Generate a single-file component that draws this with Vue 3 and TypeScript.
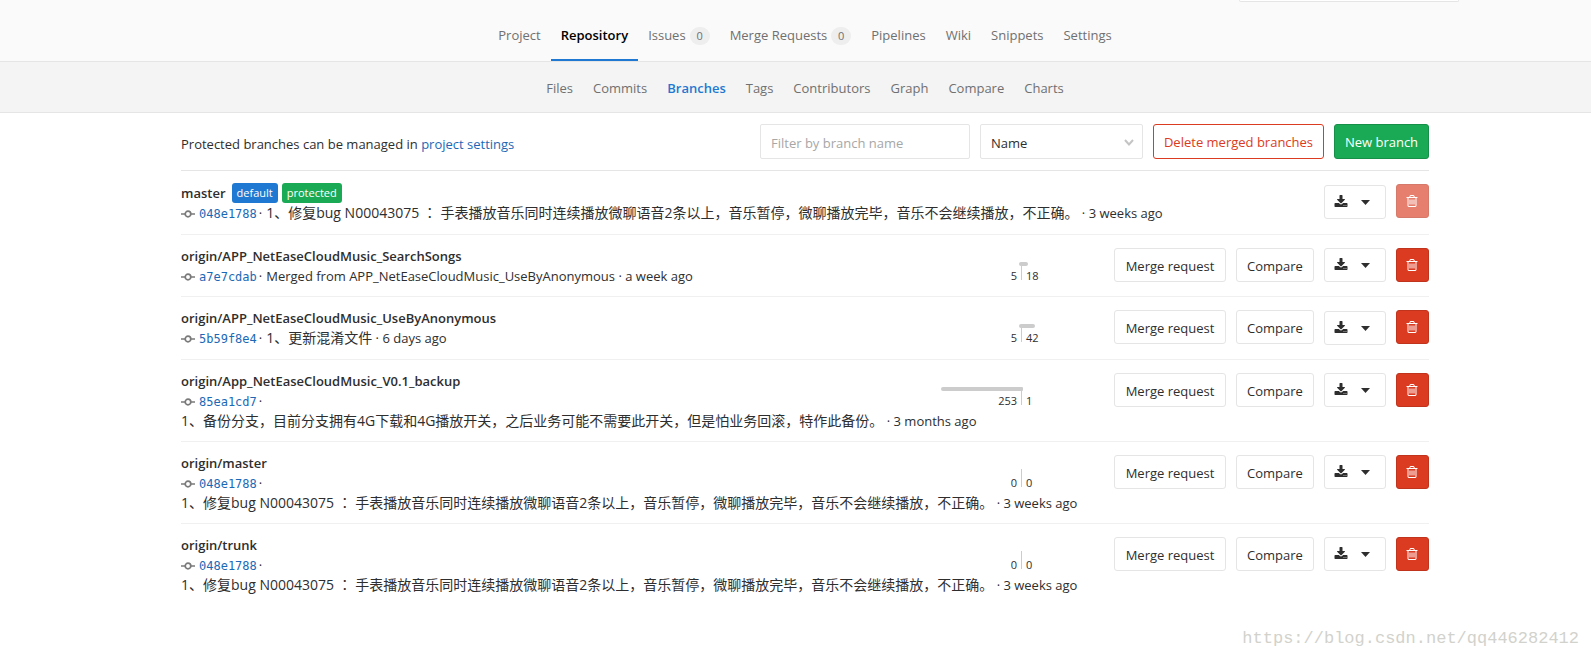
<script setup lang="ts">
import { ref } from 'vue'

interface NavItem {
  label: string
  count?: number
  active?: boolean
}

interface Branch {
  name: string
  labels?: { text: string; kind: string }[]
  sha: string
  message: string
  block?: boolean
  roomy?: boolean
  age: string
  behind?: number
  ahead?: number
  locked?: boolean
}

interface Segment {
  text: string
  kind: string
}

const mainNav: NavItem[] = [
  { label: 'Project' },
  { label: 'Repository', active: true },
  { label: 'Issues', count: 0 },
  { label: 'Merge Requests', count: 0 },
  { label: 'Pipelines' },
  { label: 'Wiki' },
  { label: 'Snippets' },
  { label: 'Settings' },
]

const subNav: NavItem[] = [
  { label: 'Files' },
  { label: 'Commits' },
  { label: 'Branches', active: true },
  { label: 'Tags' },
  { label: 'Contributors' },
  { label: 'Graph' },
  { label: 'Compare' },
  { label: 'Charts' },
]

const bugMessage =
  '1、修复bug N00043075 ： 手表播放音乐同时连续播放微聊语音2条以上，音乐暂停，微聊播放完毕，音乐不会继续播放，不正确。'

const branches: Branch[] = [
  {
    name: 'master',
    labels: [
      { text: 'default', kind: 'primary' },
      { text: 'protected', kind: 'success' },
    ],
    sha: '048e1788',
    message: bugMessage,
    roomy: true,
    age: '3 weeks ago',
    locked: true,
  },
  {
    name: 'origin/APP_NetEaseCloudMusic_SearchSongs',
    sha: 'a7e7cdab',
    message: 'Merged from APP_NetEaseCloudMusic_UseByAnonymous',
    age: 'a week ago',
    behind: 5,
    ahead: 18,
  },
  {
    name: 'origin/APP_NetEaseCloudMusic_UseByAnonymous',
    sha: '5b59f8e4',
    message: '1、更新混淆文件',
    roomy: true,
    age: '6 days ago',
    behind: 5,
    ahead: 42,
  },
  {
    name: 'origin/App_NetEaseCloudMusic_V0.1_backup',
    sha: '85ea1cd7',
    message:
      '1、备份分支，目前分支拥有4G下载和4G播放开关，之后业务可能不需要此开关，但是怕业务回滚，特作此备份。',
    block: true,
    age: '3 months ago',
    behind: 253,
    ahead: 1,
  },
  {
    name: 'origin/master',
    sha: '048e1788',
    message: bugMessage,
    block: true,
    age: '3 weeks ago',
    behind: 0,
    ahead: 0,
  },
  {
    name: 'origin/trunk',
    sha: '048e1788',
    message: bugMessage,
    block: true,
    age: '3 weeks ago',
    behind: 0,
    ahead: 0,
  },
]

const filter = ref('')
const sort = ref('Name')

const maxDivergence = Math.max(...branches.map((b) => Math.max(b.behind ?? 0, b.ahead ?? 0)))

function barWidth(count: number): string {
  return `${(count / maxDivergence) * 100}%`
}

const hanPattern = /[\u3001-\u9fff，]/

// Messages with Han text are set one size larger; the full-width colon is centred in its cell.
function segments(text: string): Segment[] {
  if (!hanPattern.test(text)) {
    return [{ text, kind: 'latin' }]
  }
  return text
    .split(/(：)/)
    .filter((part) => part !== '')
    .map((part) => ({ text: part, kind: part === '：' ? 'han han-colon' : 'han' }))
}
</script>

<template>
  <div class="page">
    <header class="main-bar">
      <div class="container search-row"><span class="search-edge"></span></div>
      <nav class="nav main-nav" aria-label="Project">
        <a v-for="item in mainNav" :key="item.label" href="#" :class="{ active: item.active }">
          {{ item.label }}<span v-if="item.count !== undefined" class="badge">{{ item.count }}</span>
        </a>
      </nav>
    </header>
    <nav class="nav sub-nav" aria-label="Repository">
      <a v-for="item in subNav" :key="item.label" href="#" :class="{ active: item.active }">{{ item.label }}</a>
    </nav>

    <main class="container">
      <div class="toolbar">
        <p class="hint">Protected branches can be managed in <a href="#">project settings</a></p>
        <input v-model="filter" class="filter" type="search" placeholder="Filter by branch name" aria-label="Filter by branch name" />
        <div class="sort">
          <select v-model="sort" aria-label="Sort by">
            <option>Name</option>
            <option>Last updated</option>
            <option>Oldest updated</option>
          </select>
          <svg width="10" height="7" viewBox="0 0 10 7" aria-hidden="true">
            <path d="M1 1l4 4.5L9 1" fill="none" stroke="#c4c4c4" stroke-width="2" />
          </svg>
        </div>
        <button type="button" class="btn btn-outline">Delete merged branches</button>
        <button type="button" class="btn btn-new">New branch</button>
      </div>

      <ul class="branches">
        <li v-for="branch in branches" :key="branch.name" class="branch" :class="{ roomy: branch.roomy, labelled: branch.labels }">
          <div class="info">
            <div class="title">
              <a href="#" class="name">{{ branch.name }}</a>
              <span v-for="label in branch.labels" :key="label.text" class="label" :class="label.kind">{{ label.text }}</span>
            </div>
            <div class="commit">
              <svg class="commit-icon" width="14" height="8" viewBox="0 0 14 8" aria-hidden="true">
                <path d="M0 4h4M10 4h4" stroke="#7a7a7a" stroke-width="1.6" />
                <circle cx="7" cy="4" r="2.8" fill="none" stroke="#7a7a7a" stroke-width="1.7" />
              </svg>
              <a href="#" class="sha">{{ branch.sha }}</a>
              <span class="dot">·</span>
              <span class="message" :class="{ block: branch.block }"><span
                v-for="(seg, i) in segments(branch.message)"
                :key="i"
                :class="seg.kind"
              >{{ seg.text }}</span> · {{ branch.age }}</span>
            </div>
          </div>
          <div v-if="branch.behind !== undefined && branch.ahead !== undefined" class="divergence">
            <div class="side behind">
              <span class="bar" :style="{ width: barWidth(branch.behind) }"></span>
              <span class="count">{{ branch.behind }}</span>
            </div>
            <div class="side ahead">
              <span class="bar" :style="{ width: barWidth(branch.ahead) }"></span>
              <span class="count">{{ branch.ahead }}</span>
            </div>
          </div>
          <div class="controls">
            <template v-if="!branch.locked">
              <button type="button" class="btn btn-merge">Merge request</button>
              <button type="button" class="btn btn-compare">Compare</button>
            </template>
            <button type="button" class="btn btn-download" aria-label="Download">
              <svg width="14" height="14" viewBox="0 0 1792 1792" fill="currentColor" aria-hidden="true">
                <path d="M1344 1344q0-26-19-45t-45-19-45 19-19 45 19 45 45 19 45-19 19-45zm256 0q0-26-19-45t-45-19-45 19-19 45 19 45 45 19 45-19 19-45zm128-224v320q0 40-28 68t-68 28h-1472q-40 0-68-28t-28-68v-320q0-40 28-68t68-28h465l135 136q58 56 136 56t136-56l136-136h464q40 0 68 28t28 68zm-325-569q17 41-14 70l-448 448q-18 19-45 19t-45-19l-448-448q-31-29-14-70 17-39 59-39h256v-448q0-26 19-45t45-19h256q26 0 45 19t19 45v448h256q42 0 59 39z" />
              </svg>
              <svg width="9" height="5" viewBox="0 0 9 5" fill="currentColor" aria-hidden="true">
                <path d="M0 0h9L4.5 5z" />
              </svg>
            </button>
            <button type="button" class="btn btn-remove" :disabled="branch.locked" aria-label="Delete branch">
              <svg width="14" height="14" viewBox="0 0 1792 1792" fill="currentColor" aria-hidden="true">
                <path d="M704 736v576q0 14-9 23t-23 9h-64q-14 0-23-9t-9-23v-576q0-14 9-23t23-9h64q14 0 23 9t9 23zm256 0v576q0 14-9 23t-23 9h-64q-14 0-23-9t-9-23v-576q0-14 9-23t23-9h64q14 0 23 9t9 23zm256 0v576q0 14-9 23t-23 9h-64q-14 0-23-9t-9-23v-576q0-14 9-23t23-9h64q14 0 23 9t9 23zm128 724v-948h-896v948q0 22 7 40.5t14.5 27 10.5 8.5h832q3 0 10.5-8.5t14.5-27 7-40.5zm-672-1076h448l-48-117q-7-9-17-11h-317q-10 2-17 11zm928 32v64q0 14-9 23t-23 9h-96v948q0 83-47 143.5t-113 60.5h-832q-66 0-113-58.5t-47-141.5v-952h-96q-14 0-23-9t-9-23v-64q0-14 9-23t23-9h309l70-167q15-37 54-63t79-26h320q40 0 79 26t54 63l70 167h309q14 0 23 9t9 23z" />
              </svg>
            </button>
          </div>
        </li>
      </ul>
    </main>
    <div class="watermark">https://blog.csdn.net/qq446282412</div>
  </div>
</template>

<style>
body {
  margin: 0;
  background: #fff;
}
</style>

<style scoped>
.page,
.page * {
  box-sizing: border-box;
}
.page {
  position: relative;
  min-height: 100vh;
  font: 13px/20px "Open Sans", "Noto Sans CJK SC", sans-serif;
  color: #2e2e2e;
}
a {
  color: #1b69b6;
  text-decoration: none;
}
.container {
  max-width: 1248px;
  margin-left: max(16px, calc((100% - 1248px + 19px) / 2));
  margin-right: 16px;
}
.main-bar {
  background: #fafafa;
  border-bottom: 1px solid #e5e5e5;
}
.search-row {
  display: flex;
  justify-content: flex-end;
}
.search-edge {
  width: 220px;
  height: 2px;
  margin-right: -30px;
  background: #fff;
  border: 1px solid #e5e5e5;
  border-top: 0;
  border-radius: 0 0 2px 2px;
}
.nav {
  display: flex;
  justify-content: center;
  padding-left: 19px;
}
.nav a {
  color: #707070;
  white-space: nowrap;
}
.main-nav a {
  padding: 23px 10px 14px;
  height: 59px;
  border-bottom: 2px solid transparent;
}
.main-nav a.active {
  color: #000;
  font-weight: 600;
  border-bottom-color: #1f78d1;
}
.badge {
  display: inline-block;
  width: 20px;
  height: 18px;
  margin-left: 4px;
  border-radius: 9px;
  background: #eee;
  font-size: 11px;
  line-height: 18px;
  text-align: center;
}
.sub-nav {
  background: #f4f4f4;
  border-bottom: 1px solid #e5e5e5;
}
.sub-nav a {
  padding: 16px 10px 14px;
}
.sub-nav a.active {
  color: #1f78d1;
  font-weight: 600;
}
.toolbar {
  display: flex;
  align-items: center;
  gap: 10px;
  padding: 11px 0;
  border-bottom: 1px solid #e5e5e5;
}
.hint {
  flex: 1;
  margin: 4px 0 0;
}
.filter,
.sort select {
  height: 35px;
  border: 1px solid #e5e5e5;
  border-radius: 2px;
  background: #fff;
  color: #2e2e2e;
  font: inherit;
  padding: 2px 10px 0;
  appearance: none;
}
.filter {
  width: 210px;
}
.filter::placeholder {
  color: #a7a7a7;
}
.sort {
  position: relative;
  width: 163px;
}
.sort select {
  display: block;
  width: 100%;
}
.sort svg {
  position: absolute;
  right: 9px;
  top: 15px;
  pointer-events: none;
}
.btn {
  display: inline-flex;
  align-items: center;
  justify-content: center;
  height: 34px;
  padding: 0;
  border: 1px solid #e5e5e5;
  border-radius: 3px;
  background: #fff;
  color: #2e2e2e;
  font: inherit;
  white-space: nowrap;
}
.btn-outline {
  width: 171px;
  height: 35px;
  border-color: #db3b21;
  color: #db3b21;
}
.btn-new {
  width: 95px;
  height: 35px;
  border-color: #168f48;
  background: #1aaa55;
  color: #fff;
}
.branches {
  list-style: none;
  margin: 0;
  padding: 0;
}
.branch {
  display: flex;
  align-items: flex-start;
  padding: 11px 0 10px;
  border-bottom: 1px solid #f0f0f0;
}
.branch:last-child {
  border-bottom: 0;
}
.info {
  flex: 1;
  min-width: 0;
  white-space: nowrap;
}
.title {
  display: flex;
  align-items: center;
  gap: 4px;
  height: 20px;
}
.name {
  color: #2e2e2e;
  font-weight: 600;
}
.labelled .title {
  height: 21px;
}
.name + .label {
  margin-left: 2px;
}
.label {
  height: 20px;
  padding: 0 5px;
  border-radius: 3px;
  color: #fff;
  font-size: 11px;
  line-height: 19px;
}
.label.primary {
  background: #1f78d1;
}
.label.success {
  background: #1aaa55;
}
.commit {
  line-height: 20px;
}
.roomy .commit {
  line-height: 21px;
}
.commit-icon {
  margin-right: 4px;
}
.sha {
  font-family: "DejaVu Sans Mono", "Liberation Mono", monospace;
  font-size: 12px;
  line-height: 16px;
}
.dot {
  margin: 0 4px 0 2px;
}
.message.block {
  display: block;
}
.han {
  font-size: 14px;
  line-height: 16px;
}
.han-colon {
  font-family: "Noto Sans CJK TC", sans-serif;
}
.divergence {
  display: flex;
  width: 161px;
  margin: 16px 12px 0 0;
}
.side {
  display: flex;
  flex-direction: column;
  width: 80px;
  height: 18px;
}
.behind {
  align-items: flex-end;
  border-right: 1px solid #ccc;
  width: 81px;
}
.bar {
  height: 4px;
  background: #ccc;
  flex: none;
}
.behind .bar {
  border-radius: 2px 0 0 2px;
}
.ahead .bar {
  border-radius: 0 2px 2px 0;
}
.count {
  font-size: 11px;
  line-height: 20px;
  padding: 0 4px;
}
.controls {
  display: flex;
  justify-content: flex-end;
  gap: 10px;
  padding-top: 2px;
  height: 34px;
}
.btn-merge,
.btn-compare {
  padding-top: 2px;
}
.btn-merge {
  width: 112px;
}
.btn-compare {
  width: 78px;
}
.btn-download {
  width: 62px;
  gap: 13px;
  padding-right: 6px;
}
.roomy .btn-download {
  margin-top: 1px;
}
.btn-remove {
  width: 33px;
  padding-right: 2px;
  border-color: #c0341d;
  background: #db3b21;
  color: #fff;
}
.btn-remove:disabled {
  opacity: 0.65;
}
.watermark {
  position: absolute;
  right: 12px;
  bottom: 9px;
  color: #d2d2cc;
  font: 17px/20px "Liberation Mono", monospace;
}
</style>
